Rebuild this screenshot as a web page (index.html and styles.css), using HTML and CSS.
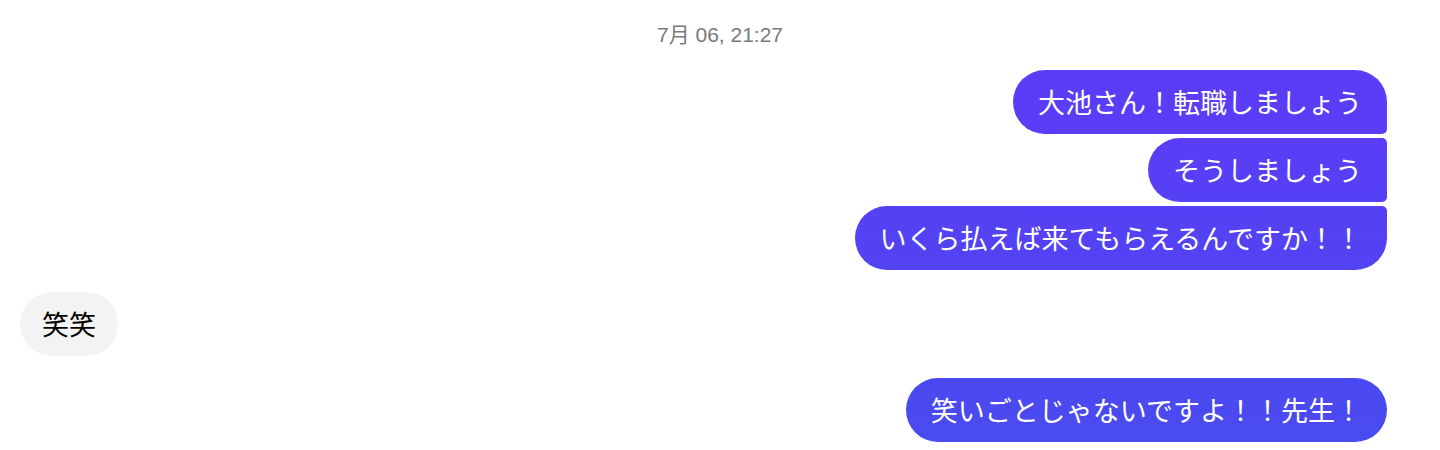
FILE: index.html
```html
<!DOCTYPE html>
<html lang="ja">
<head>
<meta charset="utf-8">
<title>Messages</title>
<link rel="stylesheet" href="styles.css">
</head>
<body>
<main class="thread">
  <div class="timestamp">7月 06, 21:27</div>
  <div class="group group-me">
    <div class="bubble me first">大池さん！転職しましょう</div>
    <div class="bubble me middle">そうしましょう</div>
    <div class="bubble me last">いくら払えば来てもらえるんですか！！</div>
  </div>
  <div class="group group-them">
    <div class="bubble them">笑笑</div>
  </div>
  <div class="group group-me">
    <div class="bubble me">笑いごとじゃないですよ！！先生！</div>
  </div>
</main>
</body>
</html>
```

FILE: styles.css
```css
html, body {
  margin: 0;
  padding: 0;
  background: #ffffff;
}

body {
  font-family: "Noto Sans", "Noto Sans CJK JP", sans-serif;
}

.thread {
  display: flex;
  flex-direction: column;
  padding: 20px 53px 0 20px;
}

.timestamp {
  text-align: center;
  font-family: "Liberation Sans", "Noto Sans CJK JP", sans-serif;
  font-size: 21px;
  line-height: 30px;
  color: #7a7a7a;
  margin-bottom: 20px;
  padding-left: 33px;
}

.group {
  display: flex;
  flex-direction: column;
  gap: 4px;
  margin-bottom: 22px;
}

.group-me {
  align-items: flex-end;
}

.group-them {
  align-items: flex-start;
}

.bubble {
  font-family: "Noto Sans CJK JP", sans-serif;
  font-size: 27px;
  line-height: 32px;
  padding: 16px 25px;
  border-radius: 32px;
  white-space: nowrap;
}

.me {
  color: #ffffff;
  background: linear-gradient(to bottom, #5d3af7 0px, #5a3df6 120px, #4c48f1 380px, #494cef 450px);
  background-attachment: fixed;
}

.me.first {
  border-bottom-right-radius: 5px;
}

.me.middle {
  border-top-right-radius: 5px;
  border-bottom-right-radius: 5px;
}

.me.last {
  border-top-right-radius: 5px;
}

.them {
  color: #000000;
  background: #f3f3f3;
  padding-left: 22px;
  padding-right: 22px;
}
```
